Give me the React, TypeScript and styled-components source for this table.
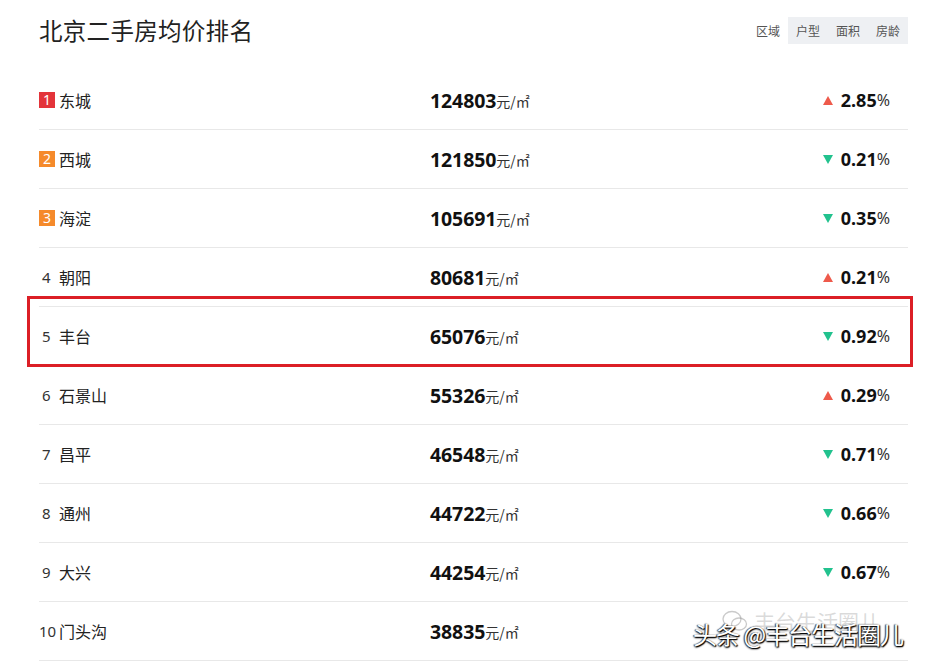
import React from "react";
import styled, { createGlobalStyle } from "styled-components";

const Global = createGlobalStyle`
  html, body { margin: 0; padding: 0; background: #fff; }
  body { font-family: "Noto Sans CJK SC", "Noto Sans", sans-serif; color: #222; }
`;

const Page = styled.div`
  position: relative;
  width: 928px;
  height: 667px;
  overflow: hidden;
  padding: 0 20px 0 39px;
  box-sizing: border-box;
`;

const Header = styled.div`
  display: flex;
  align-items: center;
  justify-content: space-between;
  height: 60px;
  margin-bottom: 11px;
`;

const Title = styled.h1`
  margin: 0;
  font-size: 23.5px;
  font-weight: 400;
  color: #222;
  letter-spacing: 0.3px;
`;

const Tabs = styled.div`
  display: flex;
  background: #eef0f3;
  height: 27px;
  margin-left: auto;
`;

const Tab = styled.div<{ $active?: boolean }>`
  width: 40px;
  display: flex;
  align-items: center;
  justify-content: center;
  font-size: 12px;
  color: #555;
  background: ${(p) => (p.$active ? "#fff" : "transparent")};
`;

const List = styled.div`
  display: flex;
  flex-direction: column;
`;

const Row = styled.div`
  position: relative;
  display: grid;
  grid-template-columns: 391px 1fr auto;
  align-items: center;
  height: 58px;
  border-bottom: 1px solid #e8e8e8;
  padding-right: 18px;
`;

const Highlight = styled.div`
  position: absolute;
  left: -12px;
  right: -5px;
  top: -11px;
  bottom: -2px;
  border: 3px solid #dc1f26;
  pointer-events: none;
`;

const NameCell = styled.div`
  display: flex;
  align-items: center;
  font-size: 16px;
  color: #222;
`;

const Badge = styled.span<{ $color: string }>`
  width: 16px;
  height: 16px;
  background: ${(p) => p.$color};
  color: #fff;
  font-size: 14px;
  line-height: 16px;
  text-align: center;
  margin-right: 4px;
  font-family: "Noto Sans", sans-serif;
`;

const RankText = styled.span<{ $wide?: boolean }>`
  display: inline-block;
  width: 20px;
  padding-left: ${(p) => (p.$wide ? "0" : "3px")};
  box-sizing: border-box;
  font-family: "Noto Sans", sans-serif;
  font-size: 15px;
  color: #333;
`;

const Price = styled.div`
  display: flex;
  align-items: center;
`;

const PriceNum = styled.span`
  font-family: "Noto Sans", sans-serif;
  font-weight: 700;
  font-size: 19.5px;
  color: #111;
  letter-spacing: -0.1px;
`;

const Unit = styled.span`
  font-size: 14px;
  color: #333;
  margin-top: 1px;
`;

const Change = styled.div`
  display: flex;
  align-items: center;
`;

const Tri = styled.span<{ $up: boolean }>`
  width: 0;
  height: 0;
  border-left: 5.5px solid transparent;
  border-right: 5.5px solid transparent;
  ${(p) =>
    p.$up
      ? "border-bottom: 9px solid #ee5a4b;"
      : "border-top: 9px solid #22c28e;"}
  margin-right: 8px;
`;

const ChangeNum = styled.span`
  font-family: "Noto Sans", sans-serif;
  font-weight: 700;
  font-size: 18px;
  color: #111;
`;

const Pct = styled.span`
  font-family: "Noto Sans", sans-serif;
  font-size: 16px;
  color: #333;
`;

const Watermark = styled.div`
  position: absolute;
  left: 693px;
  top: 616px;
  font-size: 24px;
  color: #fff;
  text-shadow: 1px 1px 1px #000, -1px 0 1px #444, 0 1px 2px #000;
  white-space: nowrap;
  letter-spacing: -1px;
`;

const WatermarkBack = styled.div`
  position: absolute;
  left: 722px;
  top: 606px;
  display: flex;
  align-items: center;
  gap: 6px;
  font-size: 21px;
  color: rgba(150, 150, 150, 0.35);
  white-space: nowrap;
`;

type Item = { name: string; price: string; change: string; up: boolean };

const data: Item[] = [
  { name: "东城", price: "124803", change: "2.85", up: true },
  { name: "西城", price: "121850", change: "0.21", up: false },
  { name: "海淀", price: "105691", change: "0.35", up: false },
  { name: "朝阳", price: "80681", change: "0.21", up: true },
  { name: "丰台", price: "65076", change: "0.92", up: false },
  { name: "石景山", price: "55326", change: "0.29", up: true },
  { name: "昌平", price: "46548", change: "0.71", up: false },
  { name: "通州", price: "44722", change: "0.66", up: false },
  { name: "大兴", price: "44254", change: "0.67", up: false },
  { name: "门头沟", price: "38835", change: "", up: false },
];

const badgeColors = ["#e3343a", "#f58a2b", "#f58a2b"];

export default function App() {
  return (
    <>
      <Global />
      <Page>
        <Header>
          <Title>北京二手房均价排名</Title>
          <Tabs>
            <Tab $active>区域</Tab>
            <Tab>户型</Tab>
            <Tab>面积</Tab>
            <Tab>房龄</Tab>
          </Tabs>
        </Header>
        <List>
          {data.map((d, i) => (
            <Row key={d.name}>
              {i === 4 && <Highlight />}
              <NameCell>
                {i < 3 ? (
                  <Badge $color={badgeColors[i]}>{i + 1}</Badge>
                ) : (
                  <RankText $wide={i === 9}>{i + 1}</RankText>
                )}
                {d.name}
              </NameCell>
              <Price>
                <PriceNum>{d.price}</PriceNum>
                <Unit>元/㎡</Unit>
              </Price>
              <Change>
                {d.change && (
                  <>
                    <Tri $up={d.up} />
                    <ChangeNum>{d.change}</ChangeNum>
                    <Pct>%</Pct>
                  </>
                )}
              </Change>
            </Row>
          ))}
        </List>
        <WatermarkBack>
          <svg width="26" height="22" viewBox="0 0 26 22">
            <ellipse cx="10" cy="9" rx="9" ry="7.5" fill="none" stroke="rgba(150,150,150,0.5)" strokeWidth="1.3" />
            <ellipse cx="17" cy="14" rx="7.5" ry="6" fill="none" stroke="rgba(150,150,150,0.5)" strokeWidth="1.3" />
          </svg>
          丰台生活圈儿
        </WatermarkBack>
        <Watermark>头条 @丰台生活圈儿</Watermark>
      </Page>
    </>
  );
}
